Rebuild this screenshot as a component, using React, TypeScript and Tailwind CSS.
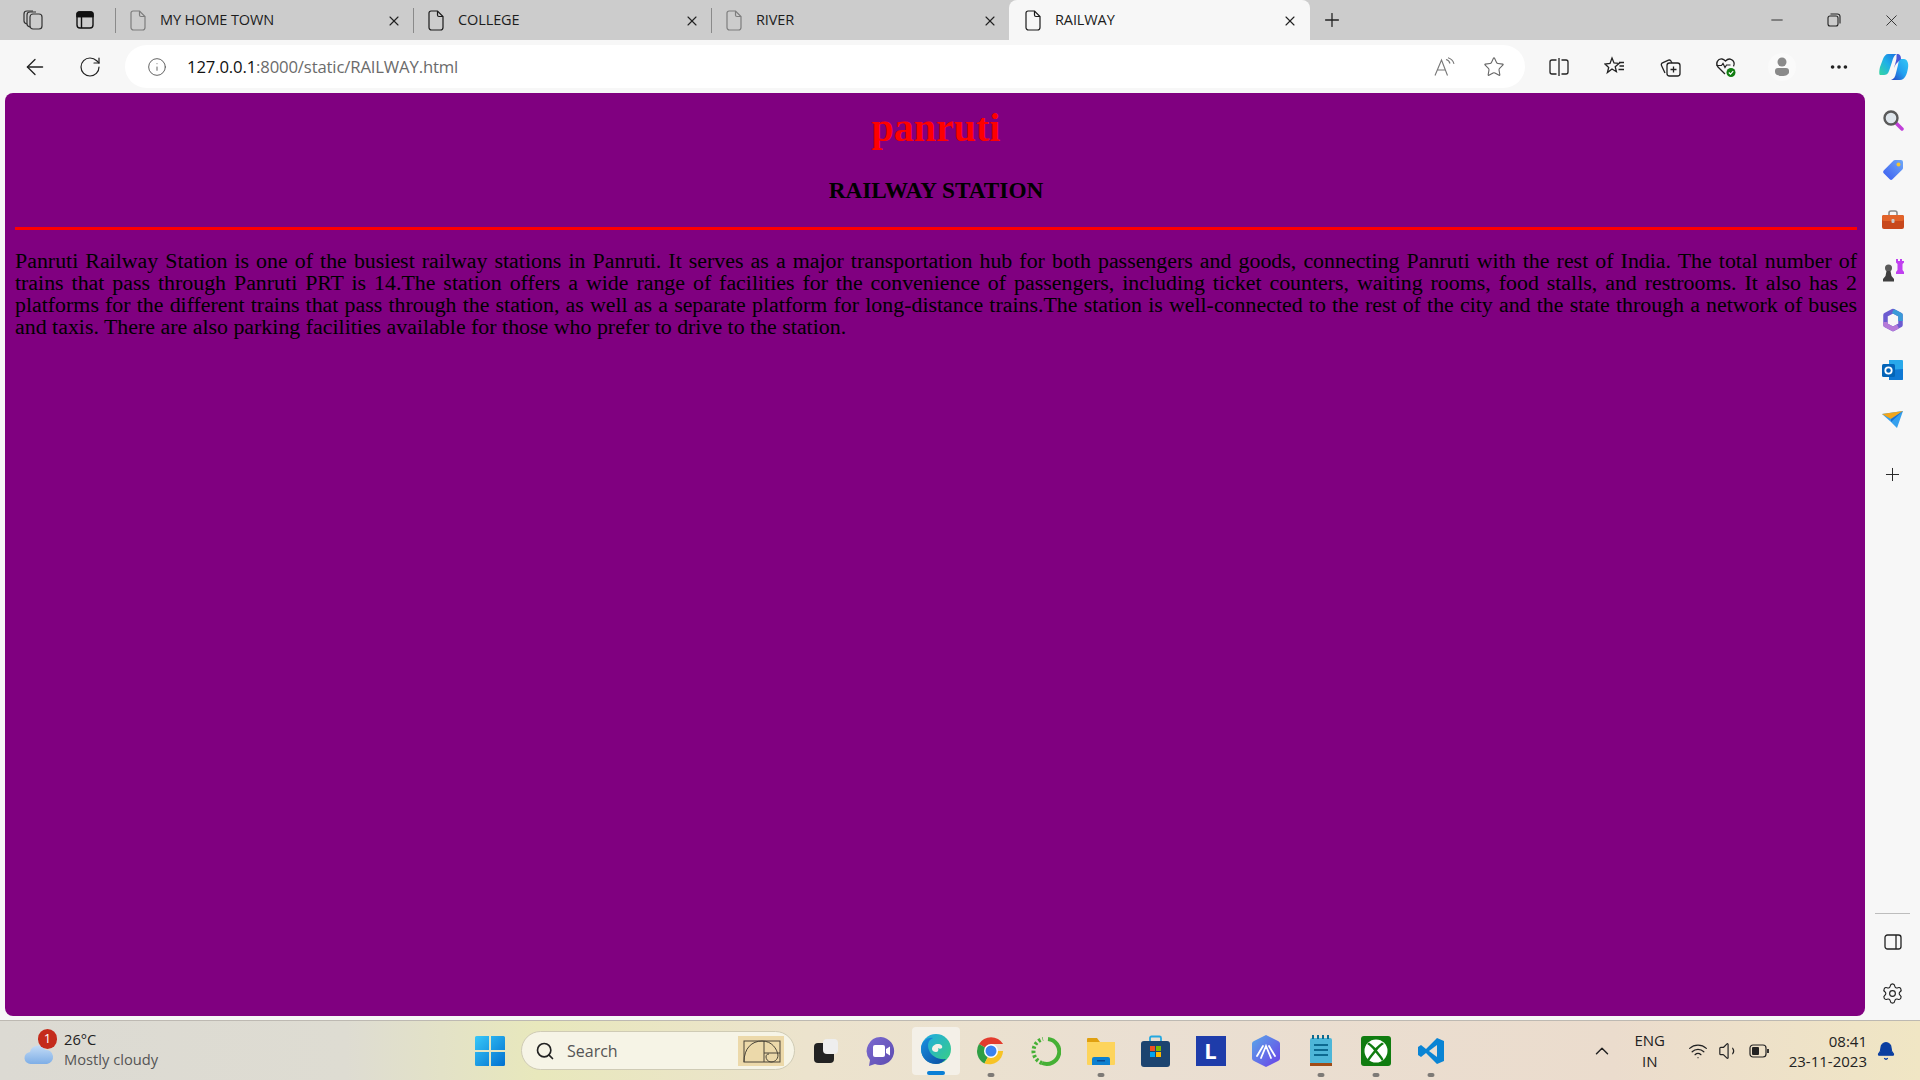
import * as React from 'react'
import { ArrowLeft, RotateCw, Info, Star, Plus, X, Minus, ChevronUp, Search, Settings, Wifi, Volume1, Bell, MoreHorizontal } from 'lucide-react'

const tabs = [
  { title: 'MY HOME TOWN', dim: true },
  { title: 'COLLEGE', dim: false },
  { title: 'RIVER', dim: true },
]

const lines = [
  'Panruti Railway Station is one of the busiest railway stations in Panruti. It serves as a major transportation hub for both passengers and goods, connecting Panruti with the rest of India. The total number of',
  'trains that pass through Panruti PRT is 14.The station offers a wide range of facilities for the convenience of passengers, including ticket counters, waiting rooms, food stalls, and restrooms. It also has 2',
  'platforms for the different trains that pass through the station, as well as a separate platform for long-distance trains.The station is well-connected to the rest of the city and the state through a network of buses',
]

function DocIcon({ dim }: { dim?: boolean }) {
  return (
    <svg width="16" height="21" viewBox="0 0 16 21" fill="none" stroke={dim ? '#7d7d7d' : '#1a1a1a'} strokeWidth="1.2" className="shrink-0">
      <path d="M3 1h6.5L15 6.5V17.5a2.5 2.5 0 0 1-2.5 2.5h-9A2.5 2.5 0 0 1 1 17.5V3a2 2 0 0 1 2-2z" />
      <path d="M9.5 1v4a1.5 1.5 0 0 0 1.5 1.5h4" />
    </svg>
  )
}

function Tab({ title, dim, active }: { title: string; dim?: boolean; active?: boolean }) {
  return (
    <div className={active ? 'relative flex h-[40px] w-[301px] items-center rounded-t-lg bg-[#f7f7f7] pl-[16px] pr-[12px]' : 'relative flex h-[40px] w-[298px] items-center pl-[15px] pr-[11px]'}>
      {!active && <div className="absolute left-0 top-[8px] h-[25px] w-px bg-[#8a8a8a]" />}
      <DocIcon dim={dim} />
      <span className="ml-[14px] flex-1 text-[14.5px] tracking-[-0.1px] text-[#1c1c1c]">{title}</span>
      <X size={16} strokeWidth={1.7} className="mt-[1px] text-[#222]" />
    </div>
  )
}

function ToolSlot({ children, className }: { children: React.ReactNode; className?: string }) {
  return <div className={'flex h-[40px] w-[55.8px] shrink-0 items-center justify-center ' + (className ?? '')}>{children}</div>
}

function SideSlot({ children }: { children: React.ReactNode }) {
  return <div className="flex h-[50px] w-full items-center justify-center">{children}</div>
}

function TaskSlot({ children, dot, active }: { children: React.ReactNode; dot?: boolean; active?: boolean }) {
  return (
    <div className={active ? 'relative flex h-[48px] w-[48px] items-center justify-center rounded bg-[#f4f0e8] mx-[3.5px]' : 'relative flex h-[48px] w-[55px] items-center justify-center'}>
      {children}
      {dot && <div className="absolute bottom-[-2px] left-1/2 h-[4px] w-[7px] -translate-x-1/2 rounded-full bg-[#7d7a76]" />}
      {active && <div className="absolute bottom-[0px] left-1/2 h-[4px] w-[18px] -translate-x-1/2 rounded-full bg-[#0a7fd6]" />}
    </div>
  )
}

export default function App() {
  return (
    <div className="flex h-screen w-full flex-col overflow-hidden bg-[#f7f7f7] font-['Open_Sans',sans-serif]">
      {/* Tab strip */}
      <div className="flex h-[40px] shrink-0 items-center bg-[#cccccc]">
        <div className="flex w-[115px] shrink-0 items-center pl-[23px]">
          <svg width="20" height="22" viewBox="0 0 20 22" fill="none" stroke="#333" strokeWidth="1.2">
            <rect x="7" y="5" width="12" height="15" rx="3" />
            <path d="M7 18c-2-.5-3-1.5-3-3V6c0-2 1-3 3-3h6" />
            <path d="M4 15c-2-.5-3-1.5-3-3V5c0-2 1-3 3-3h6" />
          </svg>
          <svg width="18" height="18" viewBox="0 0 18 18" className="ml-[33px]" fill="none" stroke="#111" strokeWidth="1.4">
            <rect x="1" y="1" width="16" height="16" rx="3" />
            <path d="M1 5.5h16M5.5 5.5V17" />
            <path d="M3 1h12a2 2 0 0 1 2 2v2.5H1V3a2 2 0 0 1 2-2z" fill="#111" />
          </svg>
        </div>
        {tabs.map((t) => (
          <Tab key={t.title} title={t.title} dim={t.dim} />
        ))}
        <Tab title="RAILWAY" active />
        <Plus size={22} strokeWidth={1.4} className="ml-[11px] text-[#222]" />
        <div className="ml-auto flex items-center">
          <div className="flex w-[56px] justify-center pr-[3px]"><Minus size={18} strokeWidth={1.2} className="text-[#222]" /></div>
          <div className="flex w-[56px] justify-center">
            <svg width="14" height="14" viewBox="0 0 14 14" fill="none" stroke="#222" strokeWidth="1.1">
              <rect x="1" y="3" width="10" height="10" rx="2" />
              <path d="M3.5 1h7A2.5 2.5 0 0 1 13 3.500v7" />
            </svg>
          </div>
          <div className="flex w-[58px] justify-center"><X size={19} strokeWidth={1.1} className="text-[#222]" /></div>
        </div>
      </div>

      {/* Toolbar */}
      <div className="flex h-[53px] shrink-0 items-start bg-[#f7f7f7] pt-[5px]">
        <div className="flex h-[43px] w-[125px] shrink-0 items-center pl-[22px]">
          <ArrowLeft size={26} strokeWidth={1.2} className="text-[#222]" />
          <RotateCw size={24} strokeWidth={1.2} className="ml-[30px] text-[#222]" />
        </div>
        <div className="flex h-[43px] w-[1400px] shrink-0 items-center rounded-full bg-white pl-[22px] pr-[20px]">
          <Info size={20} strokeWidth={1.1} className="text-[#555]" />
          <span className="ml-[20px] flex-1 text-[16.7px] tracking-[-0.15px] text-[#6b6b6b]"><span className="text-[#111]">127.0.0.1</span>:8000/static/RAILWAY.html</span>
          <svg width="21" height="20" viewBox="0 0 21 20" fill="none" stroke="#777" strokeWidth="1.1">
            <path d="M1 18.500 7.500 3l6 15.500M3.300 13h8.400" />
            <path d="M12 2.500c2 .5 3.500 2 4 4M14 .8c3 .8 5 2.800 6 6" />
          </svg>
          <Star size={22} strokeWidth={1.2} className="ml-[28px] text-[#666]" />
        </div>
        <div className="flex h-[43px] items-center pl-[6px]">
          <ToolSlot>
            <svg width="20" height="20" viewBox="0 0 20 20" fill="none" stroke="#222" strokeWidth="1.3">
              <path d="M7.500 3H3a2 2 0 0 0-2 2v10a2 2 0 0 0 2 2h4.500M12.500 3H17a2 2 0 0 1 2 2v10a2 2 0 0 1-2 2h-4.500M10 1v18" />
            </svg>
          </ToolSlot>
          <ToolSlot>
            <svg width="21" height="21" viewBox="0 0 21 21" fill="none" stroke="#222" strokeWidth="1.3">
              <path d="M8 2l2 5 5 .4-3.800 3.300 1.200 5L8 13l-4.600 3.500 1.300-5L1 8l5-.6z" />
              <path d="M15 6.500h5M15.500 10h4.500M14.500 13.500h5.500" />
            </svg>
          </ToolSlot>
          <ToolSlot>
            <svg width="22" height="22" viewBox="0 0 22 22" fill="none" stroke="#222" strokeWidth="1.3">
              <rect x="8" y="7" width="13" height="13" rx="2.500" />
              <path d="M14.500 10.500v6M11.500 13.500h6" />
              <path d="M6 17 2.500 9.500a2 2 0 0 1 1-2.700l6-2.600a2 2 0 0 1 2.600 1L13 7" />
            </svg>
          </ToolSlot>
          <ToolSlot>
            <svg width="22" height="22" viewBox="0 0 22 22" fill="none">
              <path d="M10 18 3 11C0 7 3 2.500 7 3c1.500.2 2.500 1 3.500 2C12 3.500 14 2.500 16 3.300c3 1 4 4.500 2.500 7" stroke="#222" strokeWidth="1.3" />
              <path d="M1.500 9.500h5l1.500-2 2 4 1.500-2.500h4" stroke="#222" strokeWidth="1.2" />
              <circle cx="16" cy="16.500" r="4.500" fill="#107c10" />
              <path d="M13.800 16.500l1.700 1.600 2.700-3" stroke="#fff" strokeWidth="1.200" />
            </svg>
          </ToolSlot>
          <ToolSlot>
            <div className="flex h-[28px] w-[28px] items-center justify-center rounded-full bg-[#fafafa]">
              <svg width="16" height="20" viewBox="0 0 16 20" fill="#8a8a8a">
                <circle cx="8" cy="5" r="4.500" />
                <path d="M1 14a3 3 0 0 1 3-3h8a3 3 0 0 1 3 3v1c0 2.500-3 4-7 4s-7-1.500-7-4z" />
              </svg>
            </div>
          </ToolSlot>
          <ToolSlot><MoreHorizontal size={22} strokeWidth={2} className="ml-[3px] text-[#222]" /></ToolSlot>
          <ToolSlot>
            <svg width="30" height="28" viewBox="0 0 30 28">
              <defs>
                <linearGradient id="cp1" x1="0" y1="1" x2="1" y2="0"><stop offset="0" stopColor="#36d6a0" /><stop offset="0.5" stopColor="#1fb0e8" /><stop offset="1" stopColor="#1b6fe0" /></linearGradient>
                <linearGradient id="cp2" x1="0" y1="1" x2="1" y2="0"><stop offset="0" stopColor="#2440c0" /><stop offset="0.5" stopColor="#22a0f0" /><stop offset="1" stopColor="#35c8f5" /></linearGradient>
              </defs>
              <path d="M9 1h9c-3 1-4 4-5 8l-3 9c-1 3-3 4-5 4H1C0 22 0 18 1 14L4 6c1-3 3-5 5-5z" fill="url(#cp1)" />
              <path d="M21 6h4c3 0 5 4 4 9-1 6-3 12-8 12h-9c3-1 4-3 5-7l2-8c.500-3 1-5 2-6z" fill="url(#cp2)" />
              <path d="M18 1c3 0 4 2 4 5l-4 4c-2 2-2 3-3 5l2-7c1-3 0-6 1-7z" fill="#4a58d8" />
            </svg>
          </ToolSlot>
        </div>
      </div>

      {/* Middle: page + sidebar */}
      <div className="flex min-h-0 flex-1">
        <div className="ml-[5px] mb-[4px] flex w-[1860px] shrink-0 flex-col rounded-lg bg-[#800080] pl-[10px] pr-[8px] font-['Liberation_Serif',serif] text-black">
          <h1 className="mt-[14px] text-center text-[40px] font-bold leading-[42px] text-[#ff0000]">panruti</h1>
          <h3 className="mt-[28px] text-center text-[23.3px] font-bold leading-[26px]">RAILWAY STATION</h3>
          <div className="mt-[24px] h-[3px] w-full bg-[#ff0000]" />
          <div className="mt-[20px] text-[21.9px] leading-[22px]">
            {lines.map((l) => (
              <p key={l} className="text-justify whitespace-nowrap [text-align-last:justify]">{l}</p>
            ))}
            <p>and taxis. There are also parking facilities available for those who prefer to drive to the station.</p>
          </div>
        </div>
        <div className="flex w-[55px] shrink-0 flex-col items-center pt-[2px]">
          <SideSlot>
            <svg width="22" height="22" viewBox="0 0 22 22" fill="none">
              <path d="M13.500 13.500 20 20" stroke="#c03fd8" strokeWidth="3.500" strokeLinecap="round" />
              <circle cx="9" cy="9" r="6.500" fill="#dfe6ec" stroke="#5a5a5a" strokeWidth="2.400" />
            </svg>
          </SideSlot>
          <SideSlot>
            <svg width="22" height="22" viewBox="0 0 22 22">
              <defs><linearGradient id="tag" x1="0" y1="1" x2="1" y2="0"><stop offset="0" stopColor="#3a5cf0" /><stop offset="1" stopColor="#6fa8f8" /></linearGradient></defs>
              <path d="M13 1h6a2 2 0 0 1 2 2v6a2 2 0 0 1-.6 1.400L10.500 20.300a2 2 0 0 1-2.800 0L1.700 14.300a2 2 0 0 1 0-2.800L11.600 1.600A2 2 0 0 1 13 1z" fill="url(#tag)" />
              <circle cx="16.500" cy="5.500" r="2" fill="#f4c430" />
            </svg>
          </SideSlot>
          <SideSlot>
            <svg width="24" height="20" viewBox="0 0 24 20">
              <path d="M8 5V3a2 2 0 0 1 2-2h4a2 2 0 0 1 2 2v2" fill="none" stroke="#8a8a8a" strokeWidth="1.600" />
              <rect x="1" y="5" width="22" height="14" rx="2" fill="#c8481c" />
              <rect x="1" y="5" width="22" height="6" rx="2" fill="#e2632a" />
              <rect x="10.500" y="9" width="3" height="4" rx="1" fill="#c9c9c9" />
            </svg>
          </SideSlot>
          <SideSlot>
            <svg width="24" height="24" viewBox="0 0 24 24">
              <path d="M15 1h2v2h2V1h2v2h2v1.500l-1.500 1.500v6L23 14v2h-8v-2l1.500-2V6L15 4.500z" fill="#c040f0" />
              <circle cx="7.500" cy="10" r="3.500" fill="#5a5a5a" />
              <path d="M5.500 13h4l1 5 2.500 3v2.500H2V21l2.500-3z" fill="#3f3f3f" />
            </svg>
          </SideSlot>
          <SideSlot>
            <svg width="22" height="24" viewBox="0 0 22 24" fill="none">
              <path d="M11 3 3.500 7v10L11 21l7.500-4V7z" stroke="#6c5bd0" strokeWidth="4.500" strokeLinejoin="round" />
              <path d="M11 3l7.500 4v6" stroke="#3a9ad8" strokeWidth="4.500" strokeLinejoin="round" />
              <path d="M3.500 14v3L11 21l5-2.500" stroke="#b57ad8" strokeWidth="4.500" strokeLinejoin="round" />
            </svg>
          </SideSlot>
          <SideSlot>
            <svg width="22" height="22" viewBox="0 0 22 22">
              <path d="M7 1h13a1 1 0 0 1 1 1v18a1 1 0 0 1-1 1H7z" fill="#28a8ea" />
              <path d="M7 11l14-1v10a1 1 0 0 1-1 1H7z" fill="#0f78d4" />
              <rect x="0" y="5" width="13" height="13" rx="1.500" fill="#0364b8" />
              <circle cx="6.500" cy="11.500" r="3.200" fill="none" stroke="#fff" strokeWidth="1.800" />
            </svg>
          </SideSlot>
          <SideSlot>
            <svg width="22" height="18" viewBox="0 0 22 18">
              <path d="M0 3 21 0 15 17 9 11z" fill="#35a0ee" />
              <path d="M0 3 21 0 9 8z" fill="#f2a51c" />
              <path d="M9 8 21 0 9 11z" fill="#1a6fd4" />
            </svg>
          </SideSlot>
          <div className="mt-[4px] flex h-[50px] w-full items-center justify-center">
            <Plus size={21} strokeWidth={1.1} className="text-[#222]" />
          </div>
          <div className="mt-auto h-px w-[35px] bg-[#bdbdbd]" />
          <div className="mt-[9px] flex h-[38px] w-full items-center justify-center">
            <svg width="18" height="16" viewBox="0 0 18 16" fill="none" stroke="#222" strokeWidth="1.300">
              <rect x="1" y="1" width="16" height="14" rx="2.500" />
              <path d="M12 1v14" />
            </svg>
          </div>
          <div className="mb-[16px] mt-[21px] flex h-[22px] w-full items-center justify-center">
            <Settings size={23} strokeWidth={1.2} className="text-[#222]" />
          </div>
        </div>
      </div>

      {/* Taskbar */}
      <div className="flex h-[60px] shrink-0 items-center border-t border-[#bdb9b2] bg-[linear-gradient(90deg,#dcdad3_0%,#dedcd2_18%,#e8e8bc_28%,#ece3cd_42%,#eadfd2_60%,#ebdccd_84%,#f0e6c4_100%)]">
        <div className="relative flex w-[475px] shrink-0 items-center pb-[4px] pl-[64px]">
          <svg width="30" height="22" viewBox="0 0 30 22" className="absolute left-[24px] top-[14px]">
            <defs><linearGradient id="cl" x1="0" y1="0" x2="0" y2="1"><stop offset="0" stopColor="#c3dcf6" /><stop offset="1" stopColor="#7eaee6" /></linearGradient></defs>
            <path d="M7 21a6 6 0 0 1-1-12 8 8 0 0 1 15-2 7 7 0 0 1 2 14z" fill="url(#cl)" />
          </svg>
          <div className="absolute left-[38px] top-0 flex h-[20px] w-[19px] items-center justify-center rounded-full bg-[#c42b1c] text-[13px] text-white">1</div>
          <div className="flex flex-col text-[14.7px] leading-[20px] text-[#222]">
            <span>26°C</span>
            <span className="text-[#555]">Mostly cloudy</span>
          </div>
        </div>
        <svg width="30" height="30" viewBox="0 0 30 30" className="shrink-0">
          <defs><linearGradient id="win" x1="0" y1="0" x2="1" y2="1"><stop offset="0" stopColor="#38c8f8" /><stop offset="1" stopColor="#0070d0" /></linearGradient></defs>
          <path d="M0 1.500A1.500 1.500 0 0 1 1.500 0H14v14H0zM16 0h12.500A1.500 1.500 0 0 1 30 1.500V14H16zM0 16h14v14H1.500A1.500 1.500 0 0 1 0 28.500zM16 16h14v12.500a1.500 1.500 0 0 1-1.500 1.500H16z" fill="url(#win)" />
        </svg>
        <div className="ml-[16px] flex h-[39px] w-[274px] shrink-0 items-center rounded-full border border-[#cfcbb5] bg-[#f6f4e6] pl-[13px] pr-[10px]">
          <Search size={20} strokeWidth={2} className="text-[#222]" />
          <span className="ml-[12px] flex-1 text-[16px] text-[#555]">Search</span>
          <svg width="46" height="30" viewBox="0 0 46 30" fill="none" stroke="#4a4538" strokeWidth="1">
            <rect x="0" y="0" width="46" height="30" fill="#ecd9aa" stroke="none" />
            <rect x="6" y="5" width="36" height="21" />
            <path d="M6 26C6 12 14 5 24 5s15 8 16 14c0 5-4 7-7 7s-5-3-5-5 1-3 3-3" />
            <path d="M26 5v21M26 17h16" />
          </svg>
        </div>
        {/* Taskbar apps */}
        <div className="ml-[3px] flex items-center">
          <TaskSlot>
            <div className="relative h-[24px] w-[24px]">
              <div className="absolute bottom-0 left-0 h-[20px] w-[20px] rounded-sm bg-[#222]" />
              <div className="absolute right-0 top-0 h-[15px] w-[15px] rounded-sm bg-[#eee]" />
            </div>
          </TaskSlot>
          <TaskSlot>
            <svg width="30" height="30" viewBox="0 0 30 30">
              <defs><linearGradient id="tm" x1="0" y1="0" x2="1" y2="1"><stop offset="0" stopColor="#7b6ad0" /><stop offset="1" stopColor="#5c4bb0" /></linearGradient></defs>
              <path d="M15 1a14 14 0 1 1-6 27l-6 2 1-6A14 14 0 0 1 15 1z" fill="url(#tm)" />
              <rect x="7" y="9" width="12" height="12" rx="2" fill="#fff" />
              <path d="M20 13l4-2.500v9L20 17z" fill="#fff" />
            </svg>
          </TaskSlot>
          <TaskSlot active>
            <svg width="30" height="30" viewBox="0 0 30 30" className="mb-[3px]">
              <defs>
                <linearGradient id="eg1" x1="0" y1="0" x2="1" y2="1"><stop offset="0" stopColor="#1fa8e8" /><stop offset="1" stopColor="#3ad080" /></linearGradient>
                <linearGradient id="eg2" x1="0" y1="0" x2="1" y2="1"><stop offset="0" stopColor="#1a90e0" /><stop offset="1" stopColor="#0c4ca0" /></linearGradient>
              </defs>
              <circle cx="15" cy="15" r="15" fill="url(#eg1)" />
              <path d="M0 15C0 8 6 3 12 4 7 6 6 11 8 16c2 6 9 10 17 9-3 3-6 5-10 5C7 30 0 24 0 15z" fill="url(#eg2)" />
              <path d="M11 15c0-3 3-5 6-5 3 0 5 2 4 4-1 1-3 1-4 0 1 2 0 4-2 4-2 0-4-1-4-3z" fill="#f4f0e8" />
            </svg>
          </TaskSlot>
          <TaskSlot dot>
            <svg width="30" height="30" viewBox="0 0 30 30">
              <path d="M15 15 3 8A14 14 0 0 1 27.100 8H15z" fill="#e33b2e" />
              <path d="M15 15l-6.500 12.500A14 14 0 0 1 3 8z" fill="#2f9e44" />
              <path d="M15 15h12.100A14 14 0 0 1 8.500 27.500z" fill="#f7c325" />
              <circle cx="15" cy="15" r="7" fill="#fff" />
              <circle cx="15" cy="15" r="5.500" fill="#3b82f0" />
            </svg>
          </TaskSlot>
          <TaskSlot>
            <svg width="30" height="30" viewBox="0 0 30 30" fill="none">
              <path d="M17 3a12.500 12.500 0 1 1-6 24" stroke="#45b035" strokeWidth="4" />
              <path d="M11 27A12.500 12.500 0 0 1 12 3" stroke="#45b035" strokeWidth="4" strokeDasharray="2.500 2" />
            </svg>
          </TaskSlot>
          <TaskSlot dot>
            <svg width="30" height="30" viewBox="0 0 30 30">
              <path d="M1 3a1 1 0 0 1 1-1h9l3 4h15v4H1z" fill="#e0a010" />
              <path d="M1 6h28v22a1 1 0 0 1-1 1H2a1 1 0 0 1-1-1z" fill="#fdd45c" />
              <path d="M6 29v-6a2 2 0 0 1 2-2h14a2 2 0 0 1 2 2v6z" fill="#0c80d0" />
              <rect x="11" y="24" width="8" height="1.500" fill="#0a4a90" />
            </svg>
          </TaskSlot>
          <TaskSlot>
            <svg width="29" height="32" viewBox="0 0 29 32">
              <path d="M9 6V3a1.500 1.500 0 0 1 1.500-1.500h8A1.500 1.500 0 0 1 20 3v3" fill="none" stroke="#25a8e0" strokeWidth="1.800" />
              <rect x="0" y="6" width="29" height="26" rx="3" fill="#1c4470" />
              <rect x="9" y="11" width="5" height="5" fill="#f25022" />
              <rect x="15" y="11" width="5" height="5" fill="#7fba00" />
              <rect x="9" y="17" width="5" height="5" fill="#00a4ef" />
              <rect x="15" y="17" width="5" height="5" fill="#ffb900" />
            </svg>
          </TaskSlot>
          <TaskSlot>
            <div className="flex h-[30px] w-[30px] items-center justify-center bg-[#1e3caa] text-[22px] font-bold text-white">L</div>
          </TaskSlot>
          <TaskSlot>
            <svg width="28" height="32" viewBox="0 0 28 32" fill="none">
              <defs><linearGradient id="mm" x1="0" y1="0" x2="1" y2="1"><stop offset="0" stopColor="#5aa8e8" /><stop offset="1" stopColor="#6a40e8" /></linearGradient></defs>
              <path d="M14 0 26 6a3 3 0 0 1 2 3v14a3 3 0 0 1-2 3l-12 6-12-6a3 3 0 0 1-2-3V9a3 3 0 0 1 2-3z" fill="url(#mm)" />
              <path d="M5 21 11 11M9 23l5-12 5 12M23 21l-6-10" stroke="#fff" strokeWidth="1.800" strokeLinecap="round" />
            </svg>
          </TaskSlot>
          <TaskSlot dot>
            <svg width="22" height="32" viewBox="0 0 22 32">
              <rect x="0" y="3" width="22" height="26" rx="2" fill="#4db6d8" />
              <rect x="0" y="28" width="22" height="3" fill="#a04c18" />
              <path d="M3 0v4M8 0v4M13 0v4M18 0v4" stroke="#0c6a90" strokeWidth="2" />
              <path d="M4 10h14M4 15h14M4 20h14" stroke="#0c6a90" strokeWidth="2" />
            </svg>
          </TaskSlot>
          <TaskSlot dot>
            <div className="flex h-[30px] w-[30px] items-center justify-center rounded-[3px] bg-[#107c10]">
              <svg width="24" height="24" viewBox="0 0 24 24" fill="#fff">
                <circle cx="12" cy="12" r="11.500" />
                <path d="M12 9.500C9 6.500 6.500 4.500 5 3.500L3 5c2.500 1.500 5.500 4.500 7 6.500-3.500 4-6 7.500-6.500 9l1.500 1.500c2-3 4.500-6 6.500-8.500 2 2.500 4.500 5.500 6.500 8.500l1.500-1.500c-.500-1.500-3-5-6.500-9 1.500-2 4.500-5 7-6.500l-2-1.500c-1.500 1-4 3-7 6z" fill="#107c10" />
              </svg>
            </div>
          </TaskSlot>
          <TaskSlot dot>
            <svg width="28" height="28" viewBox="0 0 28 28">
              <path d="M20 1 9 12 4 8 1 10v8l3 2 5-4 11 11 7-3V4z" fill="#0a84d4" />
              <path d="M20 8 12 14l8 6z" fill="#eadfd2" />
            </svg>
          </TaskSlot>
        </div>
        {/* Tray */}
        <div className="ml-auto flex items-center pr-[24px] text-[#222]">
          <ChevronUp size={22} strokeWidth={1.6} />
          <div className="ml-[12px] flex w-[50px] flex-col items-center text-[15px] leading-[21px]">
            <span>ENG</span>
            <span>IN</span>
          </div>
          <Wifi size={20} strokeWidth={1.5} className="ml-[13px]" />
          <Volume1 size={22} strokeWidth={1.3} className="ml-[10px]" />
          <svg width="20" height="14" viewBox="0 0 20 14" className="ml-[9px]" fill="none" stroke="#222" strokeWidth="1.200">
            <rect x="1" y="1" width="16" height="12" rx="3" />
            <rect x="3" y="3" width="7" height="8" rx="1" fill="#222" stroke="none" />
            <path d="M19 5v4" strokeWidth="1.800" />
          </svg>
          <div className="ml-[20px] flex flex-col items-end text-[15px] leading-[20px]">
            <span>08:41</span>
            <span>23-11-2023</span>
          </div>
          <Bell size={20} strokeWidth={1.5} className="ml-[9px] fill-[#0a3ea0] text-[#0a3ea0]" />
        </div>
      </div>
    </div>
  )
}
